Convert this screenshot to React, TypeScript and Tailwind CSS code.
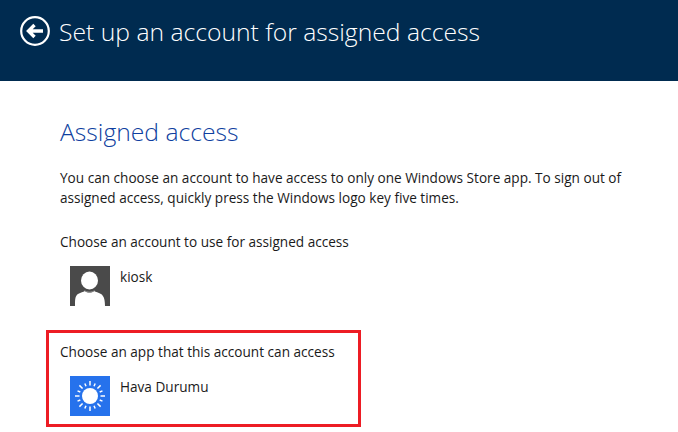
const body = { fontFamily: '"Open Sans", "Noto Sans", sans-serif' };

function BackButton() {
  return (
    <svg width="30" height="30" viewBox="0 0 30 30" className="shrink-0">
      <circle cx="15" cy="15" r="13.800" fill="none" stroke="#fff" strokeWidth="2.200" />
      <path d="M23 15H9M14.500 9l-6 6 6 6" fill="none" stroke="#fff" strokeWidth="3.400" />
    </svg>
  );
}

function UserTile() {
  return (
    <svg width="40" height="40" viewBox="0 0 40 40">
      <rect width="40" height="40" fill="#4a4a4a" />
      <ellipse cx="19.500" cy="14.500" rx="8.500" ry="9" fill="#fff" />
      <path d="M5 40c0-6 0-10 3-12 3-1.500 5-2 7-3 2 2 7 2 9 0 2 1 4 1.500 7 3 3 2 4 6 4 12z" fill="#fff" />
      <path d="M14.500 24.500c2.500 2 7.500 2 10 0" fill="none" stroke="#8a8a8a" strokeWidth="1" />
    </svg>
  );
}

function WeatherTile() {
  const rays = Array.from({ length: 16 }, (_, i) => i * 22.5);
  return (
    <svg width="40" height="40" viewBox="0 0 40 40">
      <rect width="40" height="40" fill="#2672ec" />
      <circle cx="20" cy="20" r="8" fill="#fff" />
      {rays.map((a, i) => (
        <line
          key={a}
          x1="20"
          y1="9.500"
          x2="20"
          y2={i % 2 === 0 ? 5 : 6.500}
          stroke="#fff"
          strokeWidth="1.500"
          transform={`rotate(${a} 20 20)`}
        />
      ))}
    </svg>
  );
}

export default function App() {
  return (
    <div className="w-[678px] h-[432px] overflow-hidden bg-white" style={body}>
      <div className="h-[81px] bg-[#002b50] flex items-start gap-[9px] pl-[20px] pt-[16px] text-white">
        <BackButton />
        <div className="text-[24.7px] leading-[32px] font-light">Set up an account for assigned access</div>
      </div>
      <div className="pl-[60px] pt-[34px] text-[13.6px] leading-[20px] text-[#1a1a1a]">
        <div className="text-[24.7px] leading-[34px] font-light text-[#0f3fa0]">Assigned access</div>
        <p className="mt-[19px]">
          You can choose an account to have access to only one Windows Store app. To sign out of
          <br />
          assigned access, quickly press the Windows logo key five times.
        </p>
        <div className="mt-[24px]">Choose an account to use for assigned access</div>
        <div className="mt-[14px] ml-[10px] flex items-start gap-[10px]">
          <UserTile />
          <span className="mt-[1px]">kiosk</span>
        </div>
      </div>
      <div className="ml-[46px] mt-[24px] w-[315px] h-[97px] border-[3px] border-[#ed1c24] pl-[11px] pt-[9px] text-[13.6px] leading-[20px] text-[#1a1a1a]">
        <div>Choose an app that this account can access</div>
        <div className="mt-[14px] ml-[10px] flex items-start gap-[10px]">
          <WeatherTile />
          <span className="mt-[1px]">Hava Durumu</span>
        </div>
      </div>
    </div>
  );
}
